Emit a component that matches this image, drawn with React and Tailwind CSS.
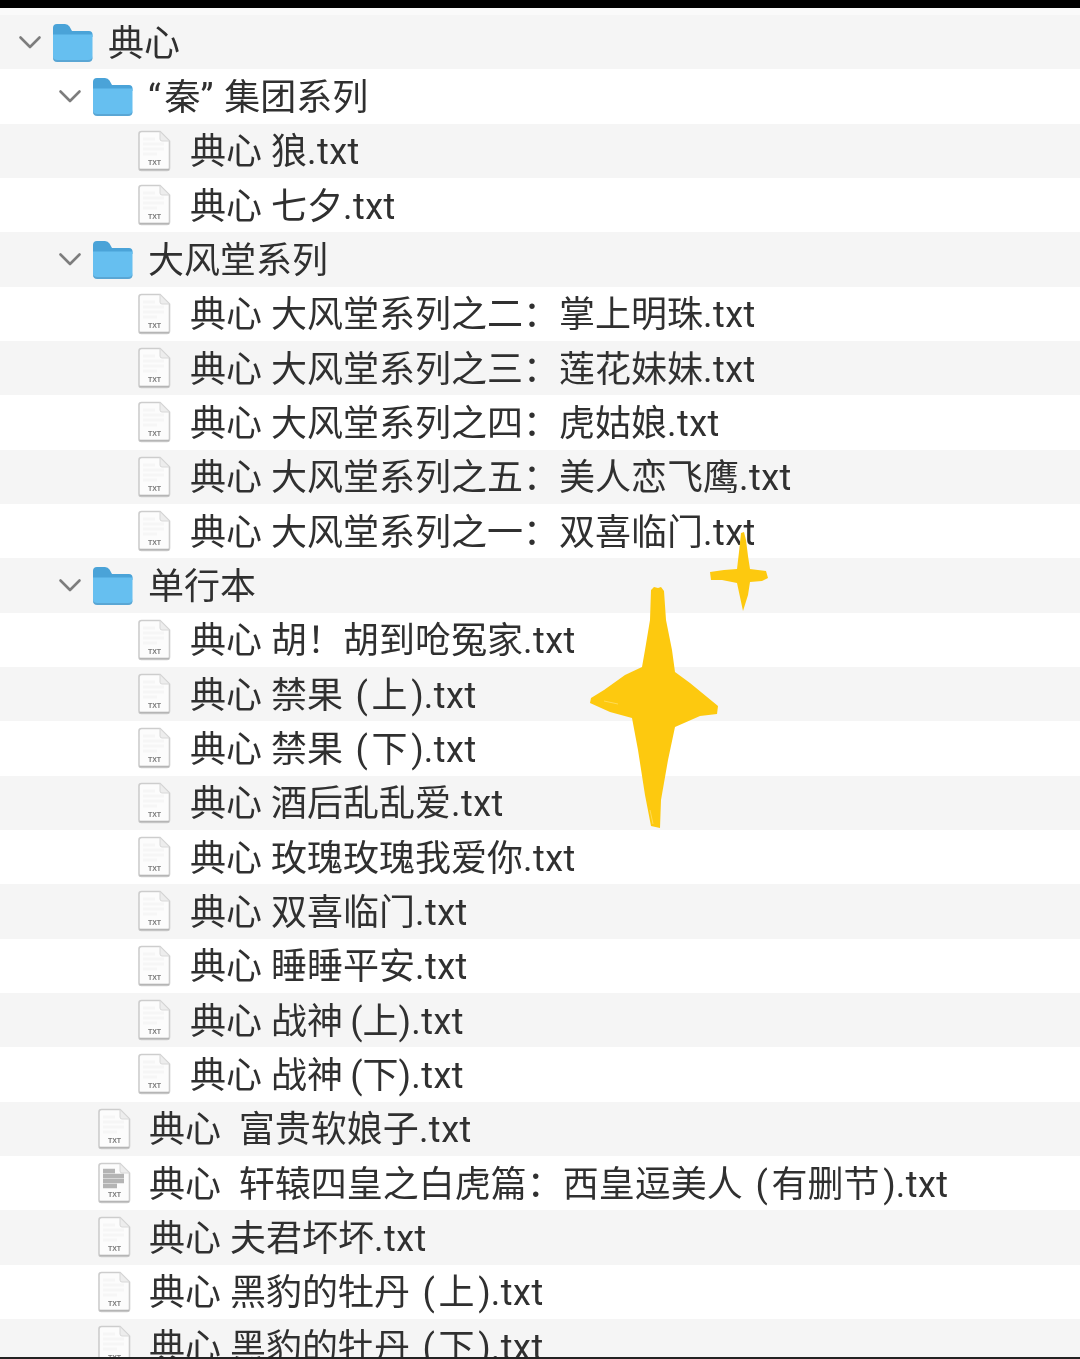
const rows = [
  { t: "folder", d: 0, n: "典心" },
  { t: "folder", d: 1, n: "“\u200A秦”\u2009\u200A集团系列" },
  { t: "file", d: 2, n: "典心 狼" },
  { t: "file", d: 2, n: "典心 七夕" },
  { t: "folder", d: 1, n: "大风堂系列" },
  { t: "file", d: 2, n: "典心 大风堂系列之二：掌上明珠" },
  { t: "file", d: 2, n: "典心 大风堂系列之三：莲花妹妹" },
  { t: "file", d: 2, n: "典心 大风堂系列之四：虎姑娘" },
  { t: "file", d: 2, n: "典心 大风堂系列之五：美人恋飞鹰" },
  { t: "file", d: 2, n: "典心 大风堂系列之一：双喜临门" },
  { t: "folder", d: 1, n: "单行本" },
  { t: "file", d: 2, n: "典心 胡！胡到呛冤家" },
  { t: "file", d: 2, n: "典心 禁果 \u200A(\u200A上\u200A)" },
  { t: "file", d: 2, n: "典心 禁果 \u200A(\u200A下\u200A)" },
  { t: "file", d: 2, n: "典心 酒后乱乱爱" },
  { t: "file", d: 2, n: "典心 玫瑰玫瑰我爱你" },
  { t: "file", d: 2, n: "典心 双喜临门" },
  { t: "file", d: 2, n: "典心 睡睡平安" },
  { t: "file", d: 2, n: "典心 战神\u2009(上)" },
  { t: "file", d: 2, n: "典心 战神\u2009(下)" },
  { t: "file", d: 1, n: "典心  富贵软娘子" },
  { t: "file", d: 1, n: "典心  轩辕四皇之白虎篇：西皇逗美人 \u200A(\u200A有删节\u200A)", dark: true },
  { t: "file", d: 1, n: "典心 夫君坏坏" },
  { t: "file", d: 1, n: "典心 黑豹的牡丹 \u200A(\u200A上\u200A)" },
  { t: "file", d: 1, n: "典心 黑豹的牡丹 \u200A(\u200A下\u200A)" },
];

function Chevron() {
  return (
    <svg width="24" height="16" viewBox="0 0 24 16" fill="none" className="shrink-0">
      <path d="M2.5 3.5 L12 13 L21.5 3.5" stroke="#7d7d7d" strokeWidth="2.6" strokeLinecap="round" strokeLinejoin="round" />
    </svg>
  );
}

function Folder() {
  return (
    <svg width="41" height="39" viewBox="0 0 41 39" className="shrink-0">
      <path d="M1 5 Q1 1 5 1 H13 Q16 1 17.5 3.5 L20 8 H37 Q40.5 8 40.5 11.5 V14 H1 Z" fill="#4aa3d8" />
      <path d="M1 11.5 H40.5 V34 Q40.5 38.5 36 38.5 H5.5 Q1 38.5 1 34 Z" fill="#66bff0" />
      <path d="M1 33 Q1 37 5.5 37 H36 Q40.5 37 40.5 33 V34.5 Q40.5 39 36 39 H5.5 Q1 39 1 34.5 Z" fill="#5aa6d4" />
    </svg>
  );
}

function FileIcon({ dark }) {
  return (
    <svg width="34" height="42" viewBox="0 0 34 42" className="shrink-0">
      <path d="M2 4 Q2 1.5 4.5 1.5 H23 L32.5 11 V38 Q32.5 40.5 30 40.5 H4.5 Q2 40.5 2 38 Z" fill="#fcfcfc" stroke="#cdcdcd" strokeWidth="1.6" />
      <path d="M2.5 39.5 H32" stroke="#b5b5b5" strokeWidth="1.6" />
      <path d="M23 1.5 V9 Q23 11 25 11 H32.5 Z" fill="#ededed" stroke="#d8d8d8" strokeWidth="1" />
      <path d="M6 9 H18 M6 14 H27 M6 19 H27 M6 24 H20" stroke={dark ? "#b4b4b4" : "#f6f6f6"} strokeWidth={dark ? 4.5 : 3} />
      <text x="17.5" y="35" textAnchor="middle" fontSize="7" fontWeight="700" fill="#7a7a7a" fontFamily="Liberation Sans, sans-serif">TXT</text>
    </svg>
  );
}

function Row({ row, index }) {
  const stripe = index % 2 === 0 ? "bg-[#f5f5f5]" : "bg-white";
  const pad =
    row.t === "folder"
      ? row.d === 0
        ? "pl-[18px]"
        : "pl-[58px]"
      : row.d === 2
        ? "pl-[137px]"
        : "pl-[97px]";
  return (
    <div className={`flex h-[54.33px] shrink-0 items-center ${stripe} ${pad}`}>
      {row.t === "folder" ? (
        <div className="flex items-center gap-[10px]">
          <Chevron />
          <Folder />
        </div>
      ) : (
        <FileIcon dark={row.dark} />
      )}
      <span className={`whitespace-pre pt-[3px] text-[36px] leading-none text-[#303030] ${row.t === "folder" ? "ml-[15px]" : row.d === 2 ? "ml-[19px]" : "ml-[18px]"}`}>
        {row.n}
        {row.t === "file" && <span className="tracking-[0.5px]">.txt</span>}
      </span>
    </div>
  );
}

export default function App() {
  return (
    <div className="relative flex h-[1359px] w-[1080px] flex-col overflow-hidden bg-white font-['Roboto','Noto_Sans_CJK_SC',sans-serif]">
      <div className="h-[8px] shrink-0 bg-black" />
      <div className="h-[7px] shrink-0 bg-[#fafafa]" />
      <div className="flex min-h-0 flex-1 flex-col overflow-hidden blur-[0.7px]">
        {rows.map((row, i) => (
          <Row key={i} row={row} index={i} />
        ))}
      </div>
      <div className="h-[2px] shrink-0 bg-[#222222]" />
      <svg className="absolute left-[585px] top-[525px]" width="190" height="310" viewBox="585 525 190 310">
        <path
          d="M651 590 L654 587 L658 588 L661 587 L664 591 L666 620 L672 650 L675 672 L690 683 L718 706 L717 714 L700 716 L675 727 L668 760 L661 800 L660 828 L651 826 L645 795 L638 750 L632 718 L610 712 L590 703 L591 698 L604 690 L625 675 L642 667 L645 650 L650 620 Z"
          fill="#fdc90f"
        />
        <path d="M604 701 L618 704 M650 810 L653 824" stroke="#ffdb55" strokeWidth="1" fill="none" />
        <path
          d="M741 533 L744 532 L746 540 L748 556 L750 569 L766 571 L768 578 L762 581 L750 582 L748 595 L743 611 L740 597 L737 583 L722 580 L711 580 L710 572 L724 570 L737 569 L739 552 Z"
          fill="#fdc90f"
        />
      </svg>
    </div>
  );
}
